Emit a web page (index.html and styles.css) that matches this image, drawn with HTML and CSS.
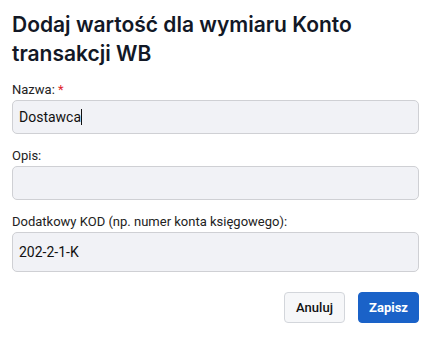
FILE: index.html
```html
<!DOCTYPE html>
<html lang="pl">
<head>
<meta charset="UTF-8">
<meta name="viewport" content="width=device-width, initial-scale=1.0">
<title>Dodaj wartość</title>
<link rel="stylesheet" href="styles.css">
</head>
<body>

<div class="dialog">
  <h1>Dodaj wartość dla wymiaru Konto transakcji WB</h1>

  <!-- Form fields -->
  <div class="field">
    <label for="name">Nazwa: <span class="req">*</span></label>
    <div class="input" id="name">Dostawca<span class="caret"></span></div>
  </div>

  <div class="field">
    <label for="desc">Opis:</label>
    <div class="input" id="desc"></div>
  </div>

  <div class="field">
    <label for="code">Dodatkowy KOD (np. numer konta księgowego):</label>
    <div class="input tall" id="code">202-2-1-K</div>
  </div>

  <!-- Actions -->
  <div class="actions">
    <button class="btn">Anuluj</button>
    <button class="btn primary">Zapisz</button>
  </div>
</div>

</body>
</html>
```

FILE: styles.css
```css
body { margin: 0; background: #fff; font-family: Roboto, "Liberation Sans", sans-serif; color: #111; }
.dialog { padding: 10px 12px 0 12px; }
h1 { font-family: Inter, "Open Sans", sans-serif; font-weight: 600; font-size: 21px; line-height: 29px; color: #121826; margin: 0 0 14px 0; }
.field { margin-bottom: 14px; }
.field label { display: block; font-size: 13px; line-height: 15px; color: #222; margin-bottom: 3px; }
.req { color: #e0252b; }
.input { box-sizing: border-box; height: 34px; background: #f1f2f6; border: 1px solid #cfd0d4; border-radius: 5px; padding: 0 6px; font-size: 14px; line-height: 32px; color: #111; }
.input.tall { height: 40px; line-height: 38px; }
.caret { display: inline-block; width: 1px; height: 16px; background: #111; vertical-align: -3px; }
.actions { display: flex; justify-content: flex-end; gap: 13px; margin-top: 20px; }
.btn { width: 61px; height: 31px; padding: 0; font-family: Roboto, "Liberation Sans", sans-serif; font-size: 13px; font-weight: 500; border: 1px solid #d3d6db; border-radius: 4px; background: #f6f7f9; color: #111; }
.btn.primary { background: #1a62c8; border-color: #1a62c8; color: #fff; font-weight: 700; }
```
